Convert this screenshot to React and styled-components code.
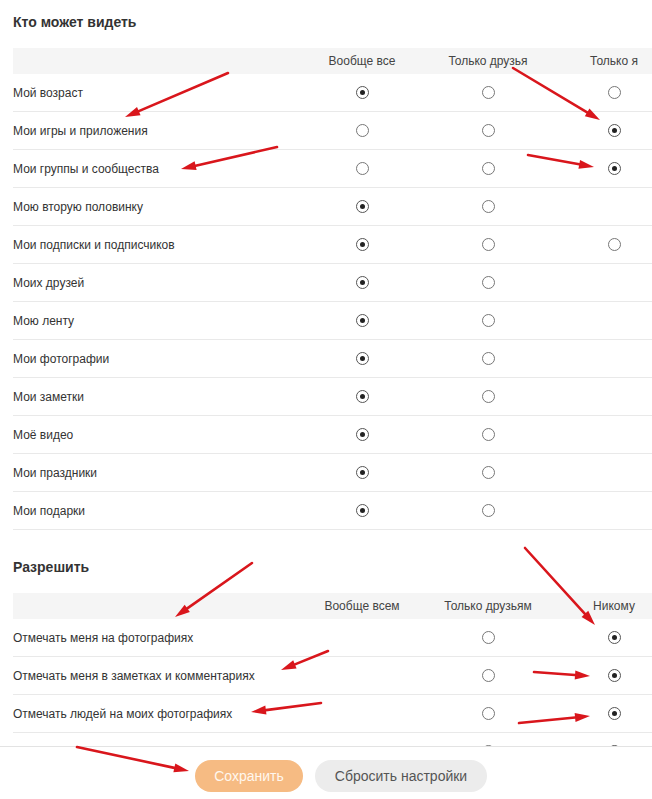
import styled, { createGlobalStyle } from "styled-components";

const GlobalStyle = createGlobalStyle`
  html, body {
    margin: 0;
    padding: 0;
    background: #fff;
    overflow: hidden;
  }
  body {
    font-family: "Liberation Sans", Arial, sans-serif;
    color: #333;
  }
`;

const Page = styled.div`
  position: relative;
  width: 664px;
  padding-left: 13px;
  height: 799px;
`;

const SectionTitle = styled.h2`
  margin: ${(p) => (p.first ? "12px" : "27px")} 0 16px;
  font-size: 14px;
  line-height: 20px;
  font-weight: bold;
  color: #333;
`;

const Table = styled.div`
  display: grid;
  grid-template-columns: 1fr 126px 126px 126px;
  width: 664px;
`;

const HeadCell = styled.div`
  height: 26px;
  background: #f5f5f5;
  display: flex;
  align-items: center;
  justify-content: center;
  font-size: 12px;
  color: #444;
`;

const LabelCell = styled.div`
  height: 37px;
  border-bottom: 1px solid #e9e9e9;
  display: flex;
  align-items: center;
  font-size: 12px;
  color: #333;
`;

const RadioCell = styled.div`
  height: 37px;
  border-bottom: 1px solid #e9e9e9;
  display: flex;
  align-items: center;
  justify-content: center;
`;

const Radio = styled.span`
  box-sizing: border-box;
  width: 13px;
  height: 13px;
  border-radius: 50%;
  border: 1px solid ${(p) => (p.checked ? "#555" : "#777")};
  display: flex;
  align-items: center;
  justify-content: center;

  &::after {
    content: "";
    width: 5px;
    height: 5px;
    border-radius: 50%;
    background: ${(p) => (p.checked ? "#222" : "transparent")};
  }
`;

const Footer = styled.div`
  position: fixed;
  left: 0;
  right: 0;
  bottom: 0;
  height: 53px;
  border-top: 1px solid #e3e3e3;
  background: #fff;
  display: flex;
  align-items: flex-start;
  gap: 12px;
  padding: 13px 0 0 195px;
  box-sizing: border-box;
`;

const Button = styled.button`
  height: 32px;
  width: ${(p) => p.w}px;
  border: 0;
  border-radius: 16px;
  font-family: "Liberation Sans", Arial, sans-serif;
  font-size: 14px;
  background: ${(p) => (p.primary ? "#f6bb83" : "#ececec")};
  color: ${(p) => (p.primary ? "#fff7ee" : "#555")};
  padding: 0;
`;

const Overlay = styled.svg`
  position: fixed;
  left: 0;
  top: 0;
  width: 652px;
  height: 799px;
  pointer-events: none;
  z-index: 5;
`;

const who = {
  heads: ["Вообще все", "Только друзья", "Только я"],
  rows: [
    ["Мой возраст", [1, 0, 0]],
    ["Мои игры и приложения", [0, 0, 1]],
    ["Мои группы и сообщества", [0, 0, 1]],
    ["Мою вторую половинку", [1, 0, null]],
    ["Мои подписки и подписчиков", [1, 0, 0]],
    ["Моих друзей", [1, 0, null]],
    ["Мою ленту", [1, 0, null]],
    ["Мои фотографии", [1, 0, null]],
    ["Мои заметки", [1, 0, null]],
    ["Моё видео", [1, 0, null]],
    ["Мои праздники", [1, 0, null]],
    ["Мои подарки", [1, 0, null]],
  ],
};

const allow = {
  heads: ["Вообще всем", "Только друзьям", "Никому"],
  rows: [
    ["Отмечать меня на фотографиях", [null, 0, 1]],
    ["Отмечать меня в заметках и комментариях", [null, 0, 1]],
    ["Отмечать людей на моих фотографиях", [null, 0, 1]],
    ["отмечать меня в видео", [null, 0, 1]],
  ],
};

// красные стрелки-пометки поверх скриншота
const arrows = [
  [228, 73, 125, 117],
  [277, 147, 181, 169],
  [513, 68, 600, 120],
  [528, 155, 594, 167],
  [252, 563, 175, 617],
  [328, 651, 281, 670],
  [321, 703, 251, 712],
  [77, 747, 189, 771],
  [525, 548, 595, 625],
  [534, 672, 590, 676],
  [519, 723, 590, 716],
];

const Arrow = ({ x1, y1, x2, y2 }) => {
  const a = Math.atan2(y2 - y1, x2 - x1);
  const len = 15;
  const half = 4.5;
  const bx = x2 - Math.cos(a) * len;
  const by = y2 - Math.sin(a) * len;
  const px = -Math.sin(a) * half;
  const py = Math.cos(a) * half;
  return (
    <g>
      <line x1={x1} y1={y1} x2={bx} y2={by} stroke="#d9161c" strokeWidth="2.6" strokeLinecap="round" />
      <polygon points={`${x2},${y2} ${bx + px},${by + py} ${bx - px},${by - py}`} fill="#d9161c" />
    </g>
  );
};

const Settings = ({ data }) => (
  <Table>
    <HeadCell />
    {data.heads.map((h) => (
      <HeadCell key={h}>{h}</HeadCell>
    ))}
    {data.rows.map(([label, vals]) => [
      <LabelCell key={label}>{label}</LabelCell>,
      ...vals.map((v, i) => (
        <RadioCell key={label + i}>{v !== null && <Radio checked={v === 1} />}</RadioCell>
      )),
    ])}
  </Table>
);

export default function App() {
  return (
    <>
      <GlobalStyle />
      <Page>
        <SectionTitle first>Кто может видеть</SectionTitle>
        <Settings data={who} />
        <SectionTitle>Разрешить</SectionTitle>
        <Settings data={allow} />
      </Page>
      <Footer>
        <Button primary w={108}>Сохранить</Button>
        <Button w={172}>Сбросить настройки</Button>
      </Footer>
      <Overlay viewBox="0 0 652 799">
        {arrows.map(([x1, y1, x2, y2], i) => (
          <Arrow key={i} x1={x1} y1={y1} x2={x2} y2={y2} />
        ))}
      </Overlay>
    </>
  );
}
